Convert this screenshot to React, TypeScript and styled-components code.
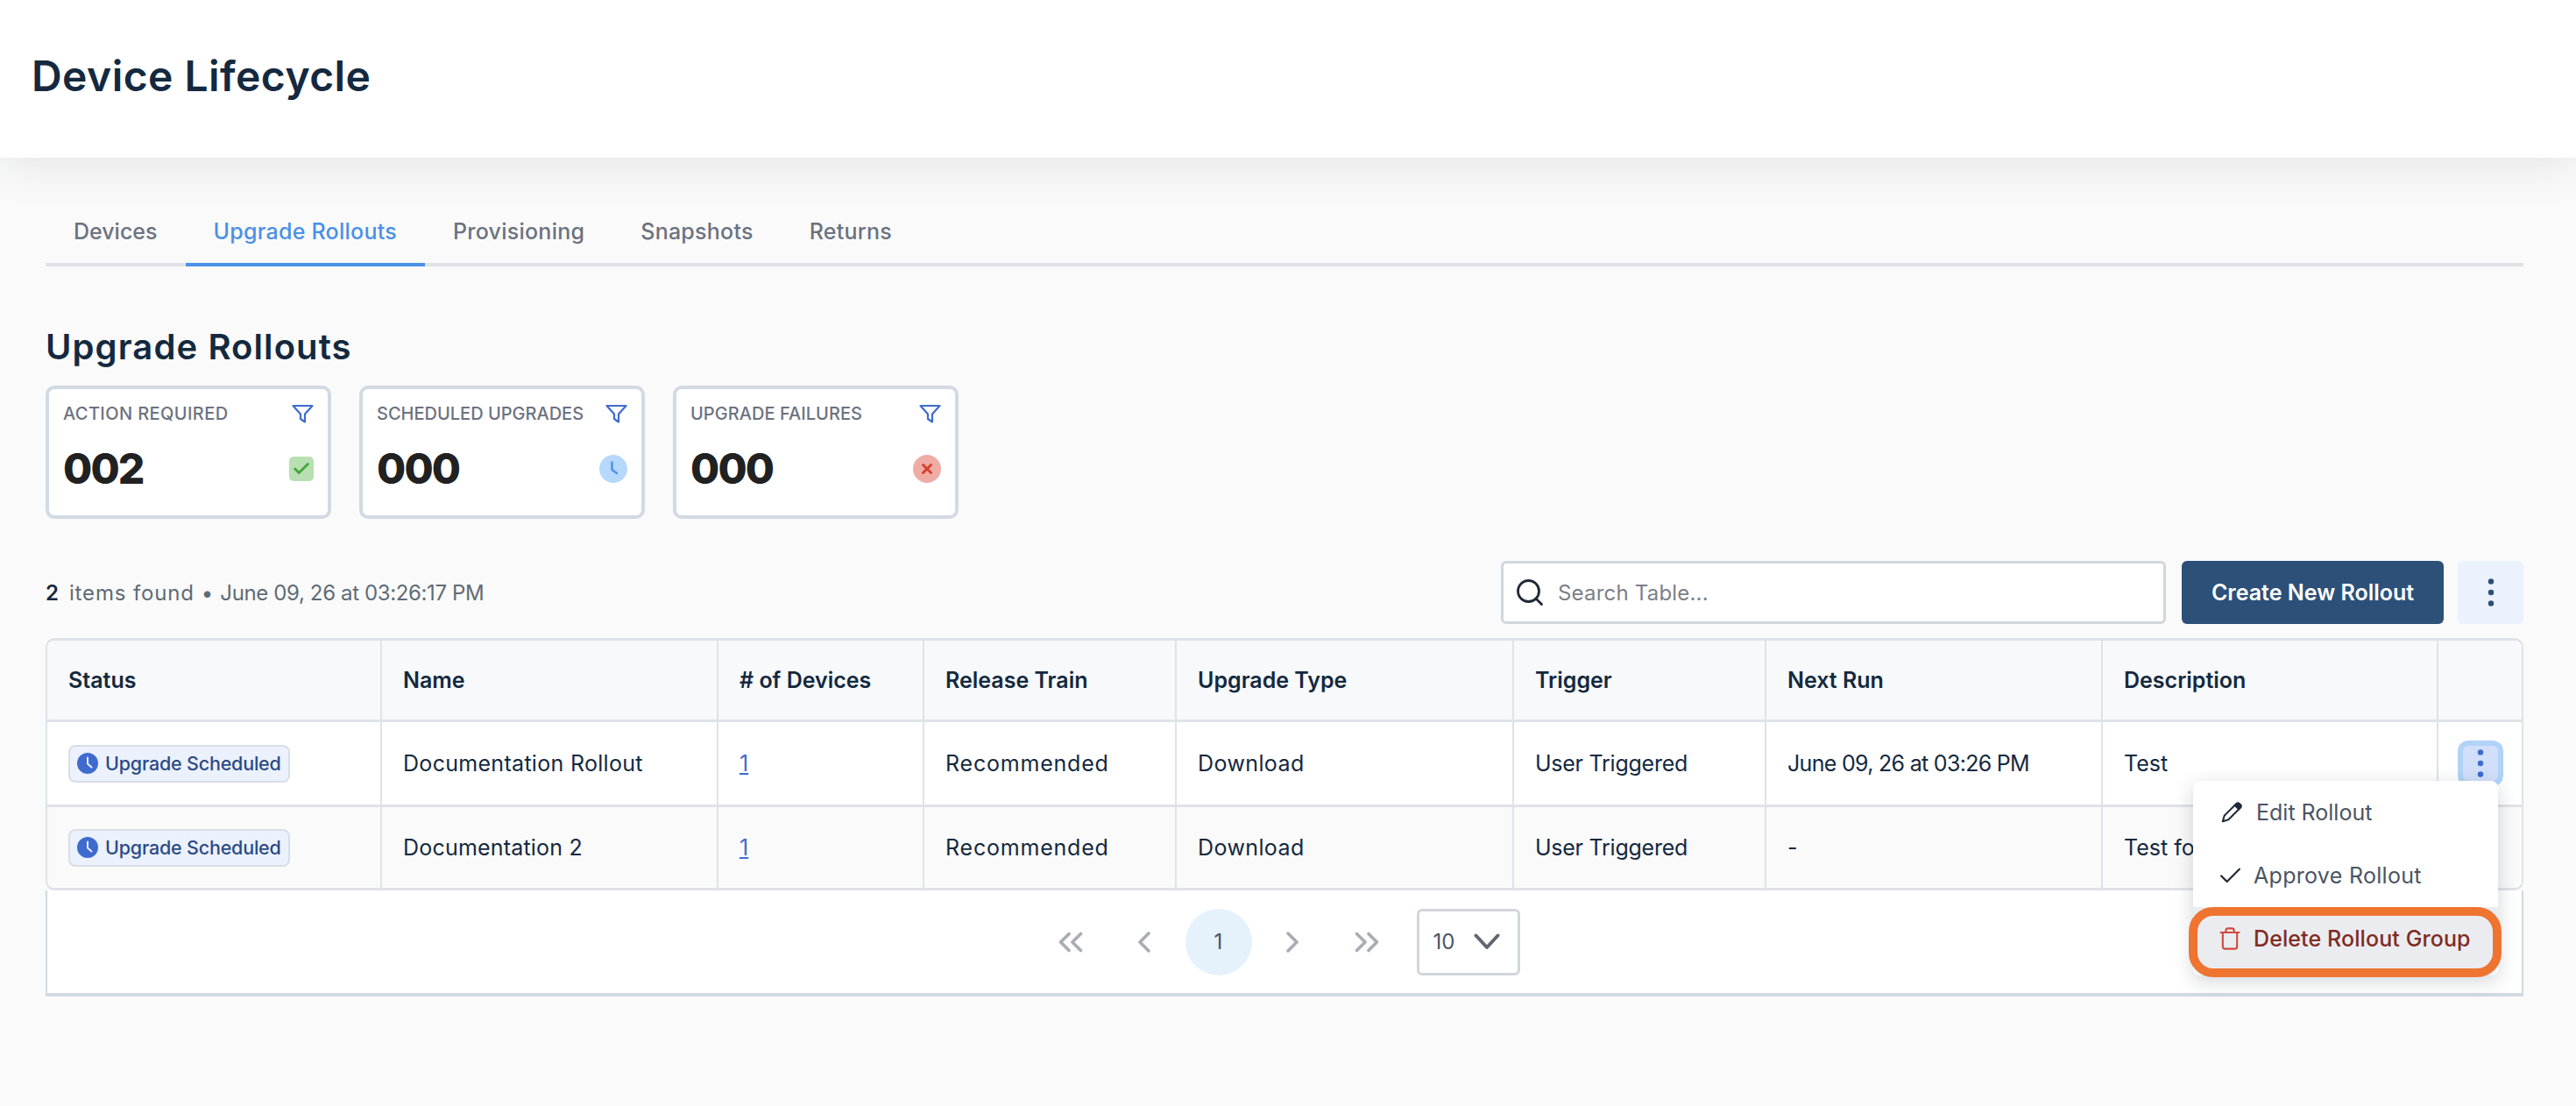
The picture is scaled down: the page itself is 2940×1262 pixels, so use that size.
import { FC, ReactNode } from 'react';
import styled, { createGlobalStyle } from 'styled-components';
import {
  Check,
  ChevronLeft,
  ChevronRight,
  ChevronsLeft,
  ChevronsRight,
  Search,
  Trash,
} from 'lucide-react';

const GlobalStyle = createGlobalStyle`
  html, body {
    margin: 0;
    padding: 0;
    background: #fafafa;
    font-family: Inter, "Noto Sans", sans-serif;
    color: #14293f;
  }
  * { box-sizing: border-box; }
`;

const Page = styled.div`
  min-height: 1262px;
  overflow: hidden;
`;

const Header = styled.header`
  position: relative;
  display: flex;
  align-items: center;
  height: 180px;
  padding: 0 0 8px 36px;
  background: #fff;
  box-shadow: 0 8px 48px rgba(30, 40, 60, 0.1);
`;

const PageTitle = styled.h1`
  margin: 0;
  font-size: 48px;
  font-weight: 600;
  letter-spacing: 0.45px;
  color: #14293f;
`;

const Main = styled.main`
  padding: 48px 60px 0 52px;
`;

const Tabs = styled.nav`
  display: flex;
  height: 76px;
  border-bottom: 4px solid #dfe2e7;
`;

const Tab = styled.div<{ $active?: boolean; $track?: number }>`
  display: flex;
  align-items: center;
  height: 76px;
  padding: 0 32px;
  font-size: 25px;
  font-weight: 500;
  letter-spacing: ${({ $track }) => $track ?? 0.25}px;
  color: ${({ $active }) => ($active ? '#4a90e8' : '#6b7280')};
  border-bottom: 4px solid ${({ $active }) => ($active ? '#4a90e8' : 'transparent')};
`;

const SectionTitle = styled.h2`
  margin: 62px 0 14px;
  height: 60px;
  line-height: 60px;
  font-size: 40px;
  font-weight: 600;
  letter-spacing: 1.1px;
  color: #14293f;
`;

const Cards = styled.div`
  display: flex;
  gap: 32px;
`;

const Card = styled.div`
  display: flex;
  flex-direction: column;
  width: 326px;
  height: 152px;
  padding: 14px 16px 0 16px;
  background: #fff;
  border: 4px solid #d2dae3;
  border-radius: 10px;
`;

const CardTop = styled.div`
  display: flex;
  align-items: center;
  justify-content: space-between;
  height: 28px;
`;

const CardLabel = styled.div<{ $track: number }>`
  font-size: 20px;
  font-weight: 500;
  letter-spacing: ${({ $track }) => $track}px;
  color: #6b7280;
`;

const CardBottom = styled.div`
  display: flex;
  align-items: center;
  justify-content: space-between;
  margin-top: 19px;
`;

const CardValue = styled.div`
  font-size: 48px;
  line-height: 60px;
  font-weight: 800;
  letter-spacing: -1.8px;
  color: #212121;
`;

const StatusSquare = styled.div`
  display: flex;
  align-items: center;
  justify-content: center;
  width: 28px;
  height: 28px;
  border-radius: 5px;
  background: #b8dfb2;
  color: #43a83c;
`;

const StatusRound = styled.div<{ $bg: string; $fg: string }>`
  display: flex;
  align-items: center;
  justify-content: center;
  width: 32px;
  height: 32px;
  border-radius: 50%;
  background: ${({ $bg }) => $bg};
  color: ${({ $fg }) => $fg};
`;

const Toolbar = styled.div`
  display: flex;
  align-items: center;
  margin-top: 48px;
  height: 72px;
`;

const Found = styled.div`
  flex: 1;
  display: flex;
  align-items: center;
  font-size: 24px;
  color: #5f6b76;
`;

const FoundCount = styled.b`
  margin-right: 12px;
  font-weight: 600;
  color: #14293f;
`;

const FoundText = styled.span<{ $track: number }>`
  letter-spacing: ${({ $track }) => $track}px;
`;

const FoundDot = styled.span`
  margin: 0 8px;
`;

const SearchBox = styled.div`
  display: flex;
  align-items: center;
  gap: 14px;
  width: 759px;
  height: 72px;
  padding-left: 12px;
  background: #fff;
  border: 3px solid #d2d6dd;
  border-radius: 6px;
  color: #1f2937;
`;

const Placeholder = styled.span`
  font-size: 24px;
  letter-spacing: 0.2px;
  color: #7b8088;
`;

const PrimaryButton = styled.button`
  width: 299px;
  height: 72px;
  margin-left: 18px;
  border: none;
  border-radius: 6px;
  background: #2c5078;
  color: #fff;
  font-family: inherit;
  font-size: 25px;
  font-weight: 600;
`;

const MoreButton = styled.button`
  display: flex;
  align-items: center;
  justify-content: center;
  width: 75px;
  height: 72px;
  margin-left: 16px;
  border: none;
  border-radius: 6px;
  background: #ebf1fd;
  color: #2c5078;
`;

const Table = styled.div`
  margin-top: 16px;
  background: #fff;
  border: solid #dfe3e8;
  border-width: 3px 2px;
  border-radius: 10px;
`;

const Row = styled.div<{ $bg: string; $height: number }>`
  display: grid;
  grid-template-columns: 382px 384px 235px 288px 385px 288px 384px 383px 95px;
  height: ${({ $height }) => $height}px;
  background: ${({ $bg }) => $bg};
  border-bottom: 3px solid #dfe3e8;

  &:first-child {
    border-radius: 8px 8px 0 0;
  }
  &:last-child {
    border-bottom: none;
    border-radius: 0 0 8px 8px;
  }
`;

const Cell = styled.div<{ $track?: number }>`
  position: relative;
  display: flex;
  align-items: center;
  padding: 0 0 0 24px;
  font-size: 25px;
  letter-spacing: ${({ $track }) => $track ?? 0}px;
  white-space: nowrap;
  color: #14293f;
  border-right: 2px solid #dfe3e8;

  &:last-child {
    border-right: none;
  }
`;

const HeaderCell = styled(Cell)`
  font-weight: 600;
`;

const Badge = styled.span`
  display: inline-flex;
  align-items: center;
  gap: 8px;
  height: 43px;
  width: 253px;
  padding: 0 8px;
  background: #ebf1fd;
  border: 2px solid #d9dee6;
  border-radius: 8px;
  font-size: 21.5px;
  font-weight: 500;
  letter-spacing: -0.2px;
  color: #2b4a85;
`;

const DeviceLink = styled.a`
  color: #3f6bce;
  text-decoration: underline;
`;

const KebabButton = styled.button`
  position: absolute;
  top: 50%;
  left: 28px;
  display: flex;
  align-items: center;
  justify-content: center;
  width: 40px;
  height: 40px;
  margin-top: -20px;
  padding: 0;
  border: none;
  border-radius: 6px;
  background: #d1dffa;
  color: #3f6bce;
  box-shadow: 0 0 0 6px #b0d3f7;
`;

const Menu = styled.div`
  position: absolute;
  top: 67px;
  right: 27px;
  z-index: 2;
  width: 348px;
  height: 222px;
  padding: 0;
  background: #fff;
  border-radius: 8px;
  box-shadow: 0 6px 22px rgba(30, 40, 60, 0.2);
`;

const MenuItem = styled.div<{ $danger?: boolean; $track?: number }>`
  position: relative;
  display: flex;
  align-items: center;
  height: ${({ $danger }) => ($danger ? 78 : 72)}px;
  padding: 0 0 ${({ $danger }) => ($danger ? 6 : 0)}px 32px;
  font-size: 25px;
  font-weight: ${({ $danger }) => ($danger ? 500 : 400)};
  letter-spacing: ${({ $track }) => $track ?? 0}px;
  color: ${({ $danger }) => ($danger ? '#7f2b22' : '#4b5563')};
  background: ${({ $danger }) => ($danger ? '#ebecf0' : 'transparent')};
  border-radius: ${({ $danger }) => ($danger ? '0 0 12px 12px' : '0')};
`;

const MenuIcon = styled.span<{ $left: number; $right: number; $color: string }>`
  display: flex;
  flex: none;
  margin: 0 ${({ $right }) => $right}px 0 ${({ $left }) => $left}px;
  color: ${({ $color }) => $color};
`;

const Highlight = styled.div`
  position: absolute;
  inset: 0 -4px -2px -5px;
  border: 10px solid #ee7430;
  border-radius: 28px;
  pointer-events: none;
`;

const Footer = styled.div`
  display: flex;
  align-items: center;
  justify-content: center;
  height: 121px;
  padding: 0 14px 0 0;
  background: #fff;
  border: solid #d2dae3;
  border-width: 0 2px 4px;
`;

const Pager = styled.div`
  display: flex;
  align-items: center;
  gap: 8.5px;
  margin-right: 19px;
`;

const PageButton = styled.div<{ $current?: boolean }>`
  display: flex;
  align-items: center;
  justify-content: center;
  width: 76px;
  height: 76px;
  border-radius: 50%;
  font-size: 24px;
  color: ${({ $current }) => ($current ? '#4b5563' : '#a9adb3')};
  background: ${({ $current }) => ($current ? '#e5f1fb' : 'transparent')};
`;

const PageSize = styled.div`
  display: flex;
  align-items: center;
  justify-content: space-between;
  width: 118px;
  height: 76px;
  padding: 0 20px 0 16px;
  font-size: 24px;
  color: #4b5563;
  border: 3px solid #d2d6dd;
  border-radius: 6px;
`;

const KebabIcon: FC<{ size?: number }> = ({ size = 32 }) => (
  <svg width={size} height={size} viewBox="0 0 32 32" fill="currentColor">
    <circle cx="16" cy="3.5" r="3.2" />
    <circle cx="16" cy="16" r="3.2" />
    <circle cx="16" cy="28.5" r="3.2" />
  </svg>
);

const FilterIcon: FC = () => (
  <svg width="25" height="22" viewBox="0 0 25 22" fill="none" stroke="#3f6bce" strokeWidth="2.2" strokeLinejoin="round">
    <path d="M1.5 2h22L15 11.5V20.5l-5-3.5v-5.5z" />
  </svg>
);

const ClockBadgeIcon: FC = () => (
  <svg width="24" height="24" viewBox="0 0 24 24" style={{ flex: 'none' }}>
    <circle cx="12" cy="12" r="12" fill="#3f6bce" />
    <path d="M12 5.5V12.5l4.5 4" fill="none" stroke="#ebf1fd" strokeWidth="2" strokeLinecap="round" />
  </svg>
);

const SmallClock: FC = () => (
  <svg width="20" height="20" viewBox="0 0 20 20" fill="none" stroke="currentColor" strokeWidth="2.4" strokeLinecap="round" strokeLinejoin="round">
    <path d="M8.5 2.5v8.5l5.5 4" />
  </svg>
);

const SmallCross: FC = () => (
  <svg width="14" height="14" viewBox="0 0 14 14" fill="none" stroke="currentColor" strokeWidth="3" strokeLinecap="round">
    <path d="M2.5 2.5l9 9M11.5 2.5l-9 9" />
  </svg>
);

const PencilIcon: FC = () => (
  <svg width="24" height="24" viewBox="0 0 26 26" fill="none" stroke="currentColor" strokeWidth="2.2" strokeLinejoin="round">
    <path d="M2 24l2-7L17 4l5 5L9 22z" />
    <path d="M17 4l2-2a2.4 2.4 0 0 1 3.4 0l1.6 1.6a2.4 2.4 0 0 1 0 3.4l-2 2z" fill="currentColor" />
  </svg>
);

const SelectChevron: FC = () => (
  <svg width="30" height="19" viewBox="0 0 30 19" fill="none" stroke="#5f6870" strokeWidth="4" strokeLinecap="round" strokeLinejoin="round">
    <path d="M2.5 2.5L15 16 27.5 2.5" />
  </svg>
);

interface StatCardProps {
  label: string;
  labelTrack: number;
  value: string;
  icon: ReactNode;
}

const StatCard: FC<StatCardProps> = ({ label, labelTrack, value, icon }) => (
  <Card>
    <CardTop>
      <CardLabel $track={labelTrack}>{label}</CardLabel>
      <FilterIcon />
    </CardTop>
    <CardBottom>
      <CardValue>{value}</CardValue>
      {icon}
    </CardBottom>
  </Card>
);

const columns = [
  'Status',
  'Name',
  '# of Devices',
  'Release Train',
  'Upgrade Type',
  'Trigger',
  'Next Run',
  'Description',
  '',
];

const rollouts = [
  { name: 'Documentation Rollout', nextRun: 'June 09, 26 at 03:26 PM', description: 'Test', bg: '#fff' },
  { name: 'Documentation 2', nextRun: '-', description: 'Test for docs', bg: '#fafafa' },
];

const App: FC = () => (
  <Page>
    <GlobalStyle />
    <Header>
      <PageTitle>Device Lifecycle</PageTitle>
    </Header>
    <Main>
      <Tabs>
        <Tab $track={0}>Devices</Tab>
        <Tab $active>Upgrade Rollouts</Tab>
        <Tab>Provisioning</Tab>
        <Tab>Snapshots</Tab>
        <Tab>Returns</Tab>
      </Tabs>

      <SectionTitle>Upgrade Rollouts</SectionTitle>

      <Cards>
        <StatCard
          label="ACTION REQUIRED"
          labelTrack={0.4}
          value="002"
          icon={
            <StatusSquare>
              <Check size={22} strokeWidth={3.2} />
            </StatusSquare>
          }
        />
        <StatCard
          label="SCHEDULED UPGRADES"
          labelTrack={0}
          value="000"
          icon={
            <StatusRound $bg="#b5d8fb" $fg="#4a90e8">
              <SmallClock />
            </StatusRound>
          }
        />
        <StatCard
          label="UPGRADE FAILURES"
          labelTrack={0.05}
          value="000"
          icon={
            <StatusRound $bg="#efaca5" $fg="#d9402e">
              <SmallCross />
            </StatusRound>
          }
        />
      </Cards>

      <Toolbar>
        <Found>
          <FoundCount>2</FoundCount>
          <FoundText $track={0.85}>items found</FoundText>
          <FoundDot>•</FoundDot>
          <FoundText $track={-0.37}>June 09, 26 at 03:26:17 PM</FoundText>
        </Found>
        <SearchBox>
          <Search size={36} strokeWidth={1.9} />
          <Placeholder>Search Table...</Placeholder>
        </SearchBox>
        <PrimaryButton>Create New Rollout</PrimaryButton>
        <MoreButton>
          <KebabIcon />
        </MoreButton>
      </Toolbar>

      <Table>
        <Row $bg="#f8f9fb" $height={93}>
          {columns.map((column, i) => (
            <HeaderCell key={i}>{column}</HeaderCell>
          ))}
        </Row>
        {rollouts.map((rollout, i) => (
          <Row key={rollout.name} $bg={rollout.bg} $height={i === 0 ? 97 : 92}>
            <Cell>
              <Badge>
                <ClockBadgeIcon />
                Upgrade Scheduled
              </Badge>
            </Cell>
            <Cell $track={i === 0 ? 0.3 : 0.2}>{rollout.name}</Cell>
            <Cell>
              <DeviceLink href="#">1</DeviceLink>
            </Cell>
            <Cell $track={0.8}>Recommended</Cell>
            <Cell $track={0.4}>Download</Cell>
            <Cell $track={-0.25}>User Triggered</Cell>
            <Cell $track={-0.7}>{rollout.nextRun}</Cell>
            <Cell>{rollout.description}</Cell>
            <Cell>
              {i === 0 && (
                <>
                  <KebabButton>
                    <KebabIcon size={32} />
                  </KebabButton>
                  <Menu>
                    <MenuItem>
                      <MenuIcon $left={0} $right={16} $color="#1f2937">
                        <PencilIcon />
                      </MenuIcon>
                      Edit Rollout
                    </MenuItem>
                    <MenuItem $track={0.3}>
                      <MenuIcon $left={-5} $right={11} $color="#1f2937">
                        <Check size={31} strokeWidth={1.7} />
                      </MenuIcon>
                      Approve Rollout
                    </MenuItem>
                    <MenuItem $danger $track={0.1}>
                      <MenuIcon $left={-4} $right={13} $color="#cf4a3f">
                        <Trash size={28} strokeWidth={1.8} />
                      </MenuIcon>
                      Delete Rollout Group
                      <Highlight />
                    </MenuItem>
                  </Menu>
                </>
              )}
            </Cell>
          </Row>
        ))}
      </Table>

      <Footer>
        <Pager>
          <PageButton>
            <ChevronsLeft size={46} strokeWidth={1.9} />
          </PageButton>
          <PageButton>
            <ChevronLeft size={40} strokeWidth={2.2} />
          </PageButton>
          <PageButton $current>1</PageButton>
          <PageButton>
            <ChevronRight size={40} strokeWidth={2.2} />
          </PageButton>
          <PageButton>
            <ChevronsRight size={46} strokeWidth={1.9} />
          </PageButton>
        </Pager>
        <PageSize>
          10
          <SelectChevron />
        </PageSize>
      </Footer>
    </Main>
  </Page>
);

export default App;
